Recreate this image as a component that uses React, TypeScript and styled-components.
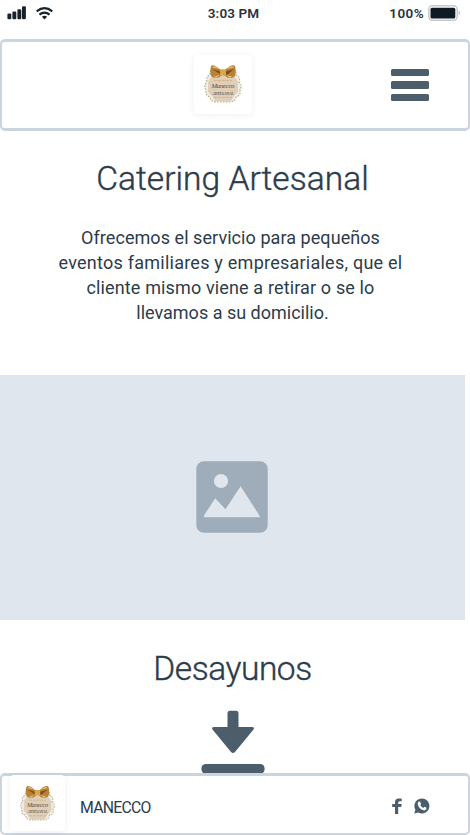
import React from 'react';
import styled, { createGlobalStyle } from 'styled-components';

const GlobalStyle = createGlobalStyle`
  * { box-sizing: border-box; }
  body { margin: 0; background: #fff; overflow: hidden; }
`;

const Screen = styled.div`
  width: 470px;
  height: 835px;
  display: flex;
  flex-direction: column;
  overflow: hidden;
  background: #fff;
  color: #2c3c4a;
  font-family: Roboto, 'Liberation Sans', sans-serif;
`;

const StatusBar = styled.div`
  height: 39px;
  flex: none;
  display: grid;
  grid-template-columns: 1fr auto 1fr;
  padding: 4px 9px 0 6px;
`;

const StatusGroup = styled.div<{ $end?: boolean }>`
  height: 18px;
  display: flex;
  align-items: center;
  gap: ${(p) => (p.$end ? 4 : 9)}px;
  justify-content: ${(p) => (p.$end ? 'flex-end' : 'flex-start')};
`;

const StatusText = styled.span<{ $spacing: number }>`
  font-size: 13.5px;
  line-height: 18px;
  font-weight: 600;
  letter-spacing: ${(p) => p.$spacing}px;
  color: #29323b;
  white-space: nowrap;
`;

const Header = styled.header`
  height: 92px;
  flex: none;
  display: grid;
  grid-template-columns: 1fr 58px 1fr;
  align-items: center;
  border: 3px solid #cbd5df;
  border-left-width: 2px;
  border-right-width: 2px;
  border-radius: 5px;
  padding: 0 39px 2px 14px;
`;

const LogoCard = styled.div<{ $w: number; $h: number }>`
  width: ${(p) => p.$w}px;
  height: ${(p) => p.$h}px;
  flex: none;
  display: flex;
  align-items: center;
  justify-content: center;
  border-radius: 4px;
  background: #fff;
  box-shadow: 0 1px 6px rgba(40, 50, 60, 0.08);
`;

const MenuButton = styled.button`
  grid-column: 3;
  justify-self: end;
  width: 38px;
  margin-top: 2px;
  padding: 0;
  border: 0;
  background: none;
  display: flex;
  flex-direction: column;
  gap: 5px;
`;

const MenuBar = styled.span`
  height: 7.6px;
  border-radius: 1.5px;
  background: #4c5e6c;
`;

const Content = styled.main`
  width: 465px;
  height: 642px;
  flex: none;
  display: flex;
  flex-direction: column;
  align-items: center;
  overflow: hidden;
`;

const Title = styled.h1<{ $top: number; $spacing: number }>`
  margin: ${(p) => p.$top}px 0 0;
  height: 44px;
  font-size: 33.5px;
  line-height: 44px;
  font-weight: 300;
  -webkit-text-stroke: 0.4px #2c3c4a;
  letter-spacing: ${(p) => p.$spacing}px;
  white-space: nowrap;
`;

const Description = styled.p`
  margin: 24px 4px 0 0;
  height: 100px;
  text-align: center;
  font-size: 18px;
  line-height: 25px;
`;

const Line = styled.span<{ $spacing: number; $indent?: number }>`
  display: block;
  white-space: nowrap;
  padding-left: ${(p) => p.$indent ?? 0}px;
  letter-spacing: ${(p) => p.$spacing}px;
`;

const Placeholder = styled.div`
  width: 465px;
  height: 245px;
  margin-top: 50px;
  flex: none;
  display: flex;
  align-items: center;
  justify-content: center;
  padding: 0 2px 2px 0;
  background: #dfe6ee;
`;

const Download = styled.svg`
  width: 64px;
  height: 64px;
  flex: none;
  margin-top: 19px;
`;

const Footer = styled.footer`
  height: 62px;
  flex: none;
  display: flex;
  align-items: center;
  border: 3px solid #cbd5df;
  border-width: 3px 2px 2px;
  border-radius: 5px;
  padding: 0 38px 0 8px;

  ${LogoCard} {
    margin-top: -3px;
  }
`;

const Brand = styled.span`
  margin: 7px 0 0 15px;
  font-size: 15.8px;
  line-height: 20px;
  letter-spacing: -0.75px;
`;

const Social = styled.div`
  margin: 2px 0 0 auto;
  display: flex;
  align-items: center;
  gap: 12px;
`;

function Signal() {
  return (
    <svg width="20" height="14" viewBox="0 0 20 14" fill="#18222b">
      <rect x="1.4" y="7.4" width="3.9" height="5.8" rx="1.2" />
      <rect x="6.4" y="5.6" width="3.9" height="7.6" rx="1.2" />
      <rect x="11.4" y="3.2" width="3.9" height="10" rx="1.2" />
      <rect x="16" y="0.3" width="3.9" height="12.9" rx="1.2" />
    </svg>
  );
}

function Wifi() {
  return (
    <svg width="18" height="13" viewBox="0 0 18 13" fill="none" stroke="#18222b" strokeWidth="2.1">
      <path d="M1.7 4.4Q9.5-2 17.3 4.4M4.4 7.6Q9.5 3.5 14.6 7.6" />
      <path d="M6.9 9.7Q9.5 8 12.1 9.7L9.5 12.5Z" fill="#18222b" stroke="none" />
    </svg>
  );
}

function Battery() {
  return (
    <svg width="33" height="16" viewBox="0 0 33 16">
      <rect x="0.8" y="0.8" width="28.4" height="14.4" rx="3.6" fill="#fff" stroke="#c8c9cb" strokeWidth="1.5" />
      <rect x="2.5" y="2.7" width="24.8" height="10.7" rx="1.5" fill="#101a22" />
      <path d="M30.6 5.2Q34 8 30.6 10.8Z" fill="#c8c9cb" />
    </svg>
  );
}

const PlaqueText = styled.text<{ $size: number }>`
  font: italic ${(p) => p.$size}px 'Liberation Serif', serif;
  fill: #5a493c;
  text-anchor: middle;
`;

function Logo({ size, subtitle }: { size: number; subtitle: string }) {
  return (
    <svg width={size} height={size * 1.05} viewBox="0 0 38 40">
      <path
        d="M9 6H29Q33 7 32 11Q37 13 35 18Q39 22 36 26Q37 32 32 33Q31 38 26 38H12Q7 38 6 33Q1 32 2 26Q-1 22 3 18Q1 13 6 11Q5 7 9 6Z"
        fill="#f3eee4" stroke="#b9b59a" strokeWidth="1.3" strokeDasharray="1.6 1.3"
      />
      <path
        d="M10 8H28L31 13L34 18V28L30 32L27 37H11L8 32L4 28V18L7 13Z"
        fill="#dfcfb9"
      />
      <path d="M10 16.5H28M10 33.5H28" stroke="#cbb088" strokeWidth="0.9" strokeDasharray="3 1" />
      <path d="M18 7Q9-1 7 2Q5 10 8 13Q15 16 18 10Z" fill="#b98135" />
      <path d="M20 7Q28-1 31 2Q33 10 30 13Q23 16 20 10Z" fill="#b98135" />
      <path d="M18 8L8 5L16 10ZM20 8L30 5L23 11Z" fill="#7b4e1e" />
      <path d="M16 5L10 2L8 3.5ZM22 5L28 2L30 3.5ZM16 11L10 12.5L12 14ZM22 11L28 12.5L26 14Z" fill="#e5bd73" />
      <rect x="16" y="5.5" width="6" height="6" rx="1.5" fill="#d9a64d" />
      <PlaqueText $size={6.8} x="19" y="24" textLength="23">Manecco</PlaqueText>
      <PlaqueText $size={4.8} x="19" y="31" textLength="22">{subtitle}</PlaqueText>
    </svg>
  );
}

function PictureIcon() {
  return (
    <svg width="72" height="72" viewBox="0 0 72 72">
      <rect x="0.3" y="0.3" width="71.4" height="71.4" rx="7.5" fill="#9eadb9" />
      <circle cx="25" cy="20" r="7.1" fill="#dfe6ee" />
      <path d="M8 56.3V54.5L19.2 37.3L29.5 48.3L44.6 25.3L63.8 55V56.3Z" fill="#dfe6ee" />
    </svg>
  );
}

function Facebook() {
  return (
    <svg width="10" height="16" viewBox="0 0 10 16">
      <path d="M3 16V9H.2V6H3V4Q3 .5 6.7.5H9.7V3.3H7.8Q6.2 3.3 6.2 4.8V6H9.7L9.2 9H6.2V16Z" fill="#4c5e6c" />
    </svg>
  );
}

function WhatsApp() {
  return (
    <svg width="16" height="16" viewBox="0 0 16 16">
      <path d="M.3 15.6L1.4 11.8A7.5 7.5 0 1 1 4.3 14.6Z" fill="#4c5e6c" />
      <path d="M4.4 3.7L6 3.5L7.1 6L6.3 7.2Q7.4 9.1 9.2 9.9L10.3 8.7L12.6 9.8Q12.6 12 10.5 12.4Q6.3 12 4.2 7.7Q3 5.3 4.4 3.7Z" fill="#fff" />
    </svg>
  );
}

export default function App() {
  return (
    <Screen>
      <GlobalStyle />
      <StatusBar>
        <StatusGroup><Signal /><Wifi /></StatusGroup>
        <StatusText $spacing={0.1}>3:03 PM</StatusText>
        <StatusGroup $end><StatusText $spacing={0.4}>100%</StatusText><Battery /></StatusGroup>
      </StatusBar>
      <Header>
        <span />
        <LogoCard $w={58} $h={59}><Logo size={38} subtitle="ARTESANAL" /></LogoCard>
        <MenuButton aria-label="Menú"><MenuBar /><MenuBar /><MenuBar /></MenuButton>
      </Header>
      <Content>
        <Title $top={26} $spacing={0.05}>Catering Artesanal</Title>
        <Description>
          <Line $spacing={0.06}>Ofrecemos el servicio para pequeños</Line>
          <Line $spacing={0.24}>eventos familiares y empresariales, que el</Line>
          <Line $spacing={0.14}>cliente mismo viene a retirar o se lo</Line>
          <Line $spacing={0} $indent={4}>llevamos a su domicilio.</Line>
        </Description>
        <Placeholder><PictureIcon /></Placeholder>
        <Title as="h2" $top={27} $spacing={-0.45}>Desayunos</Title>
        <Download viewBox="0 0 64 64" fill="#4c5e6c">
          <path d="M26.5 3Q26.5 .8 29 .8H35Q37.5 .8 37.5 3V17H51Q54 17 52.5 19.5L34 42Q32 44 30 42L11.5 19.5Q10 17 13 17H26.5Z" />
          <rect x="0.4" y="54" width="63.2" height="9.8" rx="4.5" />
        </Download>
      </Content>
      <Footer>
        <LogoCard $w={55} $h={56}><Logo size={35} subtitle="ARTESANAL" /></LogoCard>
        <Brand>MANECCO</Brand>
        <Social><Facebook /><WhatsApp /></Social>
      </Footer>
    </Screen>
  );
}
